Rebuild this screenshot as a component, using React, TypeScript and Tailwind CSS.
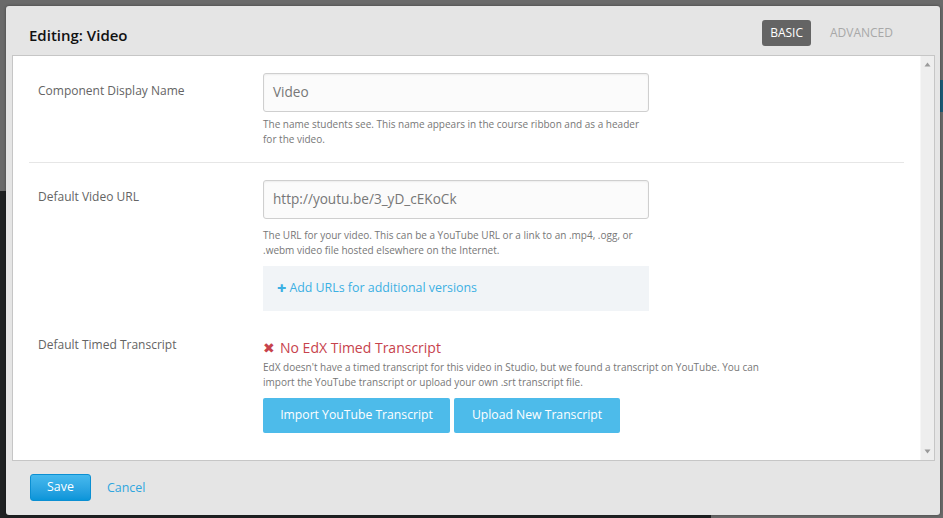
import React from "react";

function ScrollArrow({ up }: { up?: boolean }) {
  return (
    <svg width="7" height="5" viewBox="0 0 7 5" className="block">
      {up ? <polygon points="3.5,0.5 6.5,4.5 0.5,4.5" fill="#9a9a9a" /> : <polygon points="0.5,0.5 6.5,0.5 3.5,4.5" fill="#9a9a9a" />}
    </svg>
  );
}

export default function App() {
  return (
    <div className="relative w-[943px] h-[518px] overflow-hidden bg-[#6a6a6a] font-['Open_Sans','Liberation_Sans',sans-serif]">
      {/* page behind the overlay */}
      <div className="absolute left-0 top-[191px] w-[711px] h-[327px] bg-[#1f2122]" />
      <div className="absolute right-0 top-[80px] w-[6px] h-[32px] bg-[#1b5b78]" />

      {/* modal */}
      <div className="absolute left-[6px] top-[6px] w-[934px] h-[509px] rounded-[3px] bg-[#e5e5e5] flex flex-col shadow-[0_0_3px_rgba(0,0,0,0.4)]">
        {/* header */}
        <div className="h-[49px] flex items-center justify-between pl-[23px] pr-[39px] pt-[5px]">
          <h2 className="text-[15px] font-semibold text-[#111] mt-[5px]">Editing: Video</h2>
          <div className="flex items-center gap-[11px]">
            <span className="h-[26px] px-[8px] rounded-[3px] bg-[#646464] text-white text-[12px] flex items-center">BASIC</span>
            <span className="h-[26px] px-[8px] text-[#a8a8a8] text-[12px] flex items-center">ADVANCED</span>
          </div>
        </div>

        {/* content panel */}
        <div className="ml-[6px] mr-[5px] h-[406px] border border-[#c6c6c6] bg-white flex">
          <div className="flex-1 overflow-hidden px-[16px] pt-[17px]">
            {/* row 1 */}
            <div className="flex pb-[15px] border-b border-[#e6e6e6]">
              <div className="w-[234px] pl-[9px] pt-[9px] text-[12px] leading-[18px] text-[#646464]">Component Display Name</div>
              <div className="w-[386px]">
                <div className="h-[39px] border border-[#cfcfcf] rounded-[3px] bg-[#fbfbfb] shadow-[inset_0_1px_2px_rgba(0,0,0,0.06)] flex items-center px-[9px] text-[13.6px] text-[#777]">Video</div>
                <p className="mt-[5px] text-[10px] leading-[15px] text-[#777] whitespace-nowrap">
                  The name students see. This name appears in the course ribbon and as a header
                  <br />
                  for the video.
                </p>
              </div>
            </div>

            {/* row 2 */}
            <div className="flex pt-[17px]">
              <div className="w-[234px] pl-[9px] pt-[8px] text-[12px] leading-[18px] text-[#646464]">Default Video URL</div>
              <div className="w-[386px]">
                <div className="h-[39px] border border-[#cfcfcf] rounded-[3px] bg-[#fbfbfb] shadow-[inset_0_1px_2px_rgba(0,0,0,0.06)] flex items-center px-[9px] text-[13.6px] text-[#777]">http://youtu.be/3_yD_cEKoCk</div>
                <p className="mt-[9px] text-[10px] leading-[15px] text-[#777] whitespace-nowrap">
                  The URL for your video. This can be a YouTube URL or a link to an .mp4, .ogg, or
                  <br />
                  .webm video file hosted elsewhere on the Internet.
                </p>
                <div className="mt-[8px] h-[45px] bg-[#f1f4f7] flex items-center pl-[14px] text-[12.4px] text-[#3cb0e3]">
                  <span className="font-extrabold text-[16px] leading-none mr-[3px] -mt-[2px]">+</span>
                  Add URLs for additional versions
                </div>
              </div>
            </div>

            {/* row 3 */}
            <div className="flex mt-[25px]">
              <div className="w-[234px] pl-[9px] text-[12px] leading-[18px] text-[#646464]">Default Timed Transcript</div>
              <div className="w-[520px]">
                <div className="mt-[2px] flex items-center text-[14px] leading-[20px] font-medium text-[#c7424c]">
                  <span className="text-[14px] mr-[5px] ml-[0px]">✖</span>
                  No EdX Timed Transcript
                </div>
                <p className="mt-[2px] text-[10px] leading-[15px] text-[#777] whitespace-nowrap">
                  EdX doesn't have a timed transcript for this video in Studio, but we found a transcript on YouTube. You can
                  <br />
                  import the YouTube transcript or upload your own .srt transcript file.
                </p>
                <div className="mt-[8px] flex gap-[4px]">
                  <button className="h-[35px] w-[187px] rounded-[2px] bg-[#4dbbea] text-white text-[12.2px] flex items-center justify-center">Import YouTube Transcript</button>
                  <button className="h-[35px] w-[166px] rounded-[2px] bg-[#4dbbea] text-white text-[12.2px] flex items-center justify-center">Upload New Transcript</button>
                </div>
              </div>
            </div>
          </div>
          {/* scrollbar */}
          <div className="w-[14px] bg-[#eeeeee] border-l border-[#f6f6f6] flex flex-col items-center justify-between py-[6px]">
            <ScrollArrow up />
            <ScrollArrow />
          </div>
        </div>

        {/* footer */}
        <div className="flex items-center gap-[16px] pl-[24px] pt-[13px]">
          <button className="h-[27px] w-[61px] rounded-[3px] border border-[#0b8fd2] bg-gradient-to-b from-[#46b9ee] to-[#0895d9] text-white text-[12.4px] flex items-center justify-center">Save</button>
          <span className="text-[12.4px] text-[#2ea6df] mt-[1px]">Cancel</span>
        </div>
      </div>
    </div>
  );
}
